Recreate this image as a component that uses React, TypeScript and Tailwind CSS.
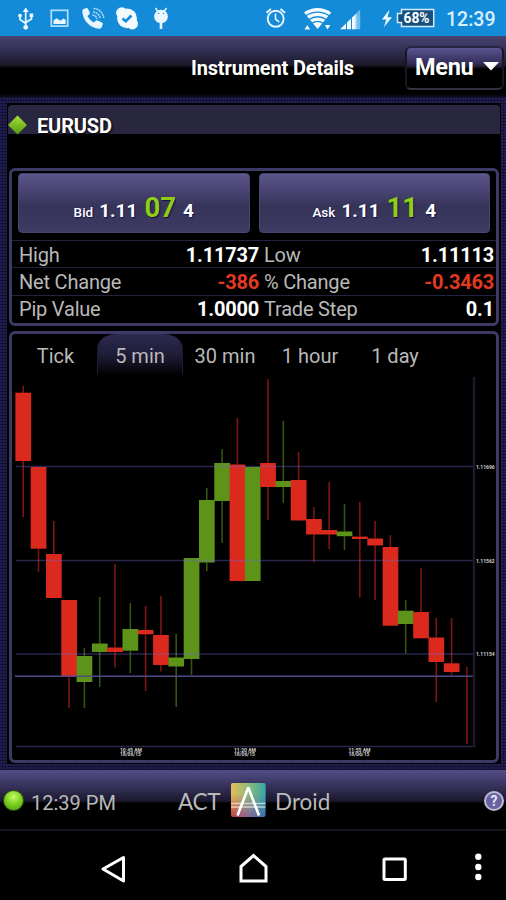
import React from 'react'

type Candle = { open: number; close: number; high?: number; low?: number; up?: boolean }

const candles: Candle[] = [
    { open: 392.7, close: 461, high: 386, low: 517 },
    { open: 467, close: 548.7, low: 572 },
    { open: 554, close: 598, high: 521 },
    { open: 600, close: 677, low: 708 },
    { open: 656, close: 682, high: 648, low: 708, up: true },
    { open: 643.5, close: 652, high: 597, low: 687, up: true },
    { open: 647.5, close: 652, high: 564, low: 667.5 },
    { open: 629, close: 650.7, high: 603, low: 673, up: true },
    { open: 630, close: 634.3, high: 606, low: 691 },
    { open: 635, close: 665, high: 596, low: 671.5 },
    { open: 657.5, close: 666.5, high: 634, low: 707, up: true },
    { open: 558, close: 659, low: 675, up: true },
    { open: 500, close: 562.5, high: 488, low: 571, up: true },
    { open: 463, close: 501, high: 449, low: 543, up: true },
    { open: 464.5, close: 581, high: 418 },
    { open: 467, close: 581, up: true },
    { open: 463, close: 487, high: 379, low: 520 },
    { open: 481, close: 487, high: 421, low: 503, up: true },
    { open: 480, close: 520.5, high: 452 },
    { open: 519, close: 534.5, high: 507, low: 562.5 },
    { open: 530, close: 534.5, high: 482, low: 549 },
    { open: 531.5, close: 536.2, high: 504, low: 550, up: true },
    { open: 536.6, close: 539, high: 502, low: 597.5 },
    { open: 538.5, close: 545.5, high: 521, low: 600 },
    { open: 547, close: 625.7, high: 535 },
    { open: 610.7, close: 624, high: 600, low: 653.5, up: true },
    { open: 612, close: 638.3, high: 568 },
    { open: 637.5, close: 662, high: 618, low: 702 },
    { open: 663.3, close: 672, high: 618, low: 675 },
    { open: 705, close: 705, high: 667, low: 744 },
]

const priceLabels = [
    { y: 466.5, text: '1.11696' },
    { y: 560.5, text: '1.11562' },
    { y: 654, text: '1.11154' },
]

const timeLabels = [
    { x: 120, text: '10:45 AM' },
    { x: 234, text: '11:20 AM' },
    { x: 348.5, text: '11:55 AM' },
]

const rows = [
    { label: 'High', value: '1.11737', label2: 'Low', value2: '1.11113', down: false },
    { label: 'Net Change', value: '-386', label2: '% Change', value2: '-0.3463', down: true },
    { label: 'Pip Value', value: '1.0000', label2: 'Trade Step', value2: '0.1', down: false },
]

const StatusBar: React.FC = () => (
    <div className="flex h-9 shrink-0 bg-[#148bd9]">
        <svg width="180" height="36" viewBox="0 0 180 36" fill="none" stroke="#e9f6ff" className="shrink-0">
            {/* usb */}
            <path d="M25.7 11v17M20 15v4.5l5.7 4M31.5 15v4l-5.8 3.5" strokeWidth="1.7" />
            <path d="M25.7 7.5l3 4.5h-6z" fill="#e9f6ff" stroke="none" />
            <circle cx="25.7" cy="27.3" r="2.4" fill="#e9f6ff" stroke="none" />
            <circle cx="20" cy="15.6" r="1.9" fill="#e9f6ff" stroke="none" />
            <path d="M29.6 13.5h3.6v3.6h-3.6z" fill="#e9f6ff" stroke="none" />
            {/* picture */}
            <rect x="51.3" y="10.3" width="16.4" height="15.8" strokeWidth="1.7" stroke="#b5e0fb" />
            <path d="M53.5 24v-3.5l3-2.3 4 2.6 3-2.3 2.2 1.5v4z" fill="#e9f6ff" stroke="none" />
            {/* call */}
            <path d="M83.3 9.3l2.8-1.2c.8-.3 1.5 0 1.9.8l1.7 3.6c.3.8.1 1.5-.5 2l-1.7 1.4c1.5 3 3.5 5 6.3 6.5l1.8-1.7c.6-.6 1.3-.7 2-.3l4.3 2.2c.8.4 1.1 1.1.8 1.9l-.8 2.3c-.4 1.2-1.4 1.9-2.8 1.9C90.5 28.3 82.5 20.5 82.3 11c0-.8.3-1.4 1-1.7z" fill="#e9f6ff" stroke="none" />
            <path d="M93.5 8.5c5 0 9.5 4 10.2 9.5M93 12c3.7.2 6.6 2.8 7.2 6.5M92.5 15c2.3.2 4 1.7 4.5 4" strokeWidth="1.5" stroke="#b5e0fb" strokeDasharray="2 .7" />
            {/* skype */}
            <circle cx="127" cy="18.3" r="9.9" fill="#f2faff" stroke="none" />
            <circle cx="121.8" cy="13" r="5.7" fill="#f2faff" stroke="none" />
            <circle cx="132.3" cy="23.7" r="5.7" fill="#f2faff" stroke="none" />
            <path d="M122.5 18.5l3.3 2.7 5.7-5.7" stroke="#148bd9" strokeWidth="2.6" />
            {/* debug robot */}
            <ellipse cx="161" cy="16.5" rx="6.9" ry="6.8" fill="#e9f6ff" stroke="none" />
            <path d="M155.5 8l2.5 3.5M166.5 8l-2.5 3.5" strokeWidth="1.5" />
            <path d="M161 23v6" strokeWidth="2.6" />
            <path d="M158 13.5h1.3M162.8 13.5h1.3" stroke="#148bd9" strokeWidth="1.2" />
        </svg>
        <div className="flex-1" />
        <svg width="246" height="36" viewBox="260 0 246 36" fill="none" stroke="#e9f6ff" className="shrink-0">
            {/* alarm */}
            <circle cx="275.7" cy="18.8" r="8" strokeWidth="1.9" />
            <path d="M275.5 13.5v5.7l3.7 2.8" strokeWidth="1.6" />
            <path d="M266.5 12.8l4.5-3.8M285 12.8l-4.5-3.8" strokeWidth="2" />
            {/* wifi */}
            <path d="M304 12.5c7.5-6 19.7-6 27.2 0L317.6 29z" fill="#f2faff" stroke="none" />
            <path d="M306 15.8c6.5-5 16.7-5 23.2 0M309 19.5c5-3.7 12.3-3.7 17.3 0M312 23.2c3.3-2.3 8-2.3 11.2 0" stroke="#148bd9" strokeWidth="1.3" />
            <path d="M304.5 29.5l2.8-4.5 2.8 4.5zM324.8 25h5.6l-2.8 4.5z" fill="#f2faff" stroke="none" />
            {/* signal */}
            <path d="M340 29.3l6-5.8v5.8zM347 22.5l4-3.9v10.7h-4zM352 17.6l3-2.9v14.6h-3z" fill="#f2faff" stroke="none" />
            <path d="M356 13.7l4.2-4.1v19.7H356z" fill="#70bcec" stroke="none" />
            <path d="M355.8 14v15.3" stroke="#bfe4fa" strokeWidth="1.5" />
            {/* battery */}
            <path d="M389.5 9.5l-7.5 10h4.3l-2.3 7.5 8-9.8h-4.5z" fill="#f2faff" stroke="none" />
            <path d="M401.5 9.5h32.2v17h-32.2v-4h-4v-9h4z" fill="#174f7c" stroke="#cfeafa" strokeWidth="1.5" />
            <text x="403.5" y="23" fontSize="13.8" fontWeight="700" fill="#fff" stroke="none" className="font-['Roboto',sans-serif]">68%</text>
            <text x="446" y="26" textLength="49.5" fontSize="19.5" fontWeight="500" fill="#d9f0ff" stroke="none" className="font-['Roboto',sans-serif]">12:39</text>
        </svg>
    </div>
)

const Header: React.FC = () => (
    <header className="grid h-[61px] shrink-0 grid-cols-[191px_1fr_101px] bg-[linear-gradient(#48436f_0,#37335a_12px,#1b1929_29px,#000_32px,#000_57px,#0d0c18_61px)]">
        <div />
        <h1 className="pt-[20px] text-[20px] leading-6 font-bold tracking-[-0.16px] whitespace-nowrap">Instrument Details</h1>
        <button className="mt-[10px] mr-[2px] ml-auto flex h-[44px] w-[99px] items-center justify-between rounded-md border-2 border-t-[#282542] border-r-[#181625] border-b-[#343143] border-l-[#181625] bg-[linear-gradient(#5a5491_0,#302c54_16px,#1c192b_19px,#000_21px)] pr-[3px] pl-2">
            <span className="text-[23.5px] leading-none font-bold tracking-[-0.3px]">Menu</span>
            <svg width="16" height="9" viewBox="0 0 16 9" className="-mt-1 shrink-0">
                <path d="M0 0h16L8 8.5z" fill="#fff" />
            </svg>
        </button>
    </header>
)

const PriceButton: React.FC<{ side: string; big: string; pips: string; last: string }> = ({ side, big, pips, last }) => (
    <button className="flex h-[60px] flex-1 items-baseline justify-center rounded-[4px] border border-[#494570] bg-[linear-gradient(#5c568a_0,#494474_16px,#37345a_32px,#3d3a63_58px)] pt-[18px] leading-8 font-bold [text-shadow:1px_1px_1px_#111047]">
        <span className="mr-[6px] text-[13.5px] font-medium">{side}</span>
        <span className="text-[19px]">{big}</span>
        <span className="mx-[7px] text-[27.5px] text-[#8fce13]">{pips}</span>
        <span className="text-[19px]">{last}</span>
    </button>
)

const Quote: React.FC = () => (
    <section className="mx-[2px] h-[158px] shrink-0 rounded-md border-[3px] border-[#3d3a66] text-[20px] leading-[24px]">
        <div className="flex gap-[9px] pt-[2px] pr-[6px] pb-[7px] pl-[6px]">
            <PriceButton side="Bid" big="1.11" pips="07" last="4" />
            <PriceButton side="Ask" big="1.11" pips="11" last="4" />
        </div>
        {rows.map((r) => (
            <div key={r.label} className="grid h-[27.3px] grid-cols-[240px_1fr] gap-[5px] border-t border-[#242240] pr-[2px] pl-[7px] tracking-[-0.2px]">
                <div className="flex justify-between pt-[1.5px]">
                    <span className="text-[#b9b9b9]">{r.label}</span>
                    <span className={r.down ? 'font-bold text-[#e23a22]' : 'font-bold text-white'}>{r.value}</span>
                </div>
                <div className="flex justify-between pt-[1.5px]">
                    <span className="text-[#b9b9b9]">{r.label2}</span>
                    <span className={r.down ? 'font-bold text-[#e23a22]' : 'font-bold text-white'}>{r.value2}</span>
                </div>
            </div>
        ))}
    </section>
)

const Chart: React.FC = () => (
    <svg width="484" height="385" viewBox="12 375 484 385" className="block">
        {candles.map((c, i) => {
            const x = 15.4 + i * 15.3
            return (
                <g key={i}>
                    {c.high && <path d={`M${x + 7.8} ${c.high}V${c.open}`} stroke={c.up ? '#345511' : '#7d1610'} strokeWidth="1.6" />}
                    {c.low && <path d={`M${x + 7.8} ${c.close}V${c.low}`} stroke={c.up ? '#345511' : '#7d1610'} strokeWidth="1.6" />}
                    <rect x={x} y={c.open} width="15.7" height={c.close - c.open} fill={c.up ? '#5d9319' : '#dc291d'} />
                </g>
            )
        })}
        {priceLabels.map((p) => (
            <g key={p.y}>
                <path d={`M16 ${p.y}H474`} stroke="#6b66c8" strokeOpacity=".38" strokeWidth="1.6" />
                <text x="476" y={p.y + 2} fontSize="5" fontWeight="700" fill="#d0d0d0">{p.text}</text>
            </g>
        ))}
        <path d="M15 676.3H474" stroke="#504c83" strokeWidth="1.5" />
        <path d="M16 746.5H475.5" stroke="#282545" strokeWidth="1.5" />
        <path d="M474 377V747" stroke="#1b1a29" strokeWidth="2.5" />
        {timeLabels.map((t) => (
            <g key={t.x} fontSize="5" fontWeight="700" fill="#d0d0d0">
                <text x={t.x} y="751.5">{t.text}</text>
                <text x={t.x} y="756">18/06/15</text>
            </g>
        ))}
    </svg>
)

const ChartPanel: React.FC = () => (
    <section className="mx-[2px] mt-[5px] h-[432px] shrink-0 overflow-hidden rounded-md border-[3px] border-[#3d3a66]">
        <nav className="flex h-[41px] text-[20px] leading-[44px] text-[#b9b9b9]">
            <button className="w-[85px] pl-[2px] text-center">Tick</button>
            <button className="w-[86px] rounded-t-[20px_14px] border-x border-[#1d1b34] bg-[linear-gradient(#2d2a50,#1d1b34_55%,#000)] text-center">5 min</button>
            <button className="w-[84px] text-center whitespace-nowrap">30 min</button>
            <button className="w-[86px] text-center">1 hour</button>
            <button className="w-[84px] text-center">1 day</button>
        </nav>
        <Chart />
    </section>
)

const Footer: React.FC = () => (
    <footer className="flex h-[61px] shrink-0 items-start border-b-2 border-[#14131b] bg-[linear-gradient(#534e87_0,#3b3764_13px,#1b192e_31px,#000_33px)] text-[#b9b9b9]">
        <div className="mt-[20px] ml-[3px] size-[21px] rounded-full border border-[#31580d] bg-[radial-gradient(circle_at_50%_30%,#c8f56a,#7ed321_45%,#4c970e)]" />
        <span className="mt-[21px] ml-[7px] w-[146px] text-[20px] leading-6">12:39 PM</span>
        <span className="mt-[18px] w-[54px] pl-px font-['Lato',sans-serif] text-[22.5px] leading-7 tracking-[-0.3px]">ACT</span>
        <svg width="35" height="35" viewBox="0 0 35 35" className="mt-[13px] shrink-0">
            <defs>
                <linearGradient id="logoTop">
                    <stop offset="0" stopColor="#e5bd57" />
                    <stop offset=".5" stopColor="#8fbc79" />
                    <stop offset="1" stopColor="#35a7a6" />
                </linearGradient>
                <linearGradient id="logoBottom">
                    <stop offset="0" stopColor="#c8373c" />
                    <stop offset=".45" stopColor="#8c6196" />
                    <stop offset="1" stopColor="#3f70b5" />
                </linearGradient>
                <linearGradient id="logoFade" x2="0" y2="1">
                    <stop offset=".3" stopColor="#fff" />
                    <stop offset="1" stopColor="#000" />
                </linearGradient>
                <mask id="logoMask">
                    <rect width="35" height="35" fill="url(#logoFade)" />
                </mask>
            </defs>
            <rect width="34.5" height="34" rx="2" fill="url(#logoBottom)" />
            <rect width="34.5" height="34" rx="2" fill="url(#logoTop)" mask="url(#logoMask)" />
            <path d="M0 20.5h34.5M0 24h34.5" stroke="#fff" strokeOpacity=".6" strokeWidth="1.3" />
            <path d="M6.5 32.500L17.300 4.500l10.700 28" fill="none" stroke="#fff" strokeWidth="2.6" strokeLinejoin="bevel" />
        </svg>
        <span className="mt-[18px] ml-[9px] flex-1 font-['Lato',sans-serif] text-[22.5px] leading-7">Droid</span>
        <div className="mt-[21px] mr-[2px] flex size-5 items-center justify-center rounded-full border-2 border-[#bdbbd6] bg-[#6762a0] text-[14px] leading-none font-bold text-[#e4e3f3]">?</div>
    </footer>
)

const NavBar: React.FC = () => (
    <svg width="506" height="69" viewBox="0 831 506 69" fill="none" stroke="#fff" strokeWidth="3" className="block shrink-0">
        <path d="M123.5 857.5v23.5L103 869z" strokeLinejoin="round" />
        <path d="M241 881v-14.5l12.5-11 12.5 11V881z" />
        <rect x="384" y="859" width="21.3" height="20.5" rx="1" />
        <g fill="#fff" stroke="none">
            <circle cx="478.3" cy="856.8" r="3.2" />
            <circle cx="478.3" cy="867" r="3.2" />
            <circle cx="478.3" cy="877" r="3.2" />
        </g>
    </svg>
)

export default function App() {
    return (
        <div className="flex h-[900px] w-[506px] flex-col overflow-hidden bg-black font-['Roboto',sans-serif] text-white">
            <StatusBar />
            <Header />
            <main className="h-[673px] shrink-0 bg-[#17153a] bg-[repeating-linear-gradient(#0c0b1f99_0_1px,transparent_1px_3px),repeating-linear-gradient(90deg,#28256699_0_2px,transparent_2px_3px)] pt-[6px] pr-[5px] pl-[7px]">
                <div className="flex h-[661px] flex-col bg-black">
                    <div className="mx-px mt-[2px] mb-[34px] flex h-[29px] shrink-0 items-center rounded-t-[4px] bg-[#29263f]">
                        <svg width="20" height="20" viewBox="0 0 20 20" className="mt-[11px] shrink-0">
                            <defs>
                                <linearGradient id="gem" x2="0" y2="1">
                                    <stop offset="0" stopColor="#a5df3b" />
                                    <stop offset="1" stopColor="#559b0c" />
                                </linearGradient>
                            </defs>
                            <path d="M9.5 .5L19 10l-9.5 9.5L0 10z" fill="url(#gem)" />
                        </svg>
                        <span className="mt-[12px] ml-[9px] text-[20px] leading-none font-bold tracking-[-0.15px] [text-shadow:1px_1px_2px_#000]">EURUSD</span>
                    </div>
                    <Quote />
                    <ChartPanel />
                </div>
            </main>
            <Footer />
            <NavBar />
        </div>
    )
}
